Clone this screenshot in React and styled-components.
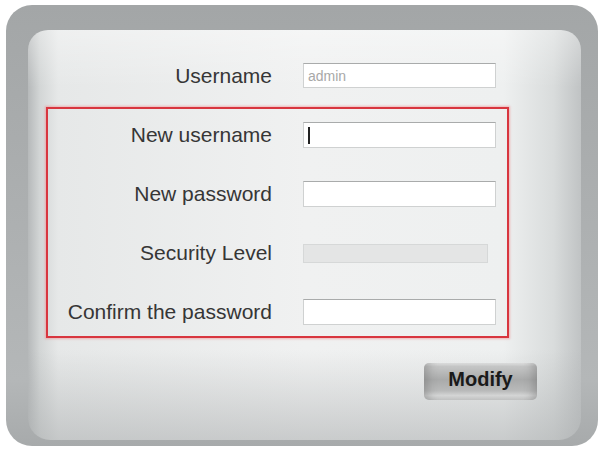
import React from 'react'
import styled, { createGlobalStyle } from 'styled-components'

const GlobalStyle = createGlobalStyle`
    html, body {
        margin: 0;
        padding: 0;
        background: #ffffff;
    }
    body {
        font-family: "Liberation Sans", Arial, sans-serif;
    }
`

const Page = styled.div`
    width: 603px;
    height: 451px;
    padding: 5px 5px 5px 6px;
    box-sizing: border-box;
`

const Frame = styled.div`
    width: 592px;
    height: 441px;
    box-sizing: border-box;
    padding: 25px 17px 6px 22px;
    border-radius: 26px;
    background: linear-gradient(to bottom, #a3a6a7 0%, #abaeaf 40%, #b4b7b8 85%, #a7aaab 100%);
`

const Panel = styled.div`
    height: 100%;
    box-sizing: border-box;
    padding-top: 33px;
    border-radius: 20px 20px 22px 22px;
    background:
        linear-gradient(to bottom, rgba(255, 255, 255, 0.35) 0, rgba(255, 255, 255, 0) 14%),
        linear-gradient(to bottom, rgba(170, 173, 174, 0) 78%, rgba(170, 173, 174, 0.55) 100%),
        linear-gradient(to right, #b6b9ba 0, #d3d6d6 12px, #e6e8e8 30px, #f0f1f1 50%, #eef0f0 86%, #d9dcdc 95%, #c0c3c4 100%);
    display: flex;
    flex-direction: column;
`

const Row = styled.div`
    display: grid;
    grid-template-columns: 224px 193px;
    column-gap: 31px;
    align-items: center;
    height: ${p => p.$h || 26}px;
    padding-left: ${p => p.$indent || 0}px;
`

const Label = styled.span`
    text-align: right;
    font-size: 21px;
    color: #363636;
    white-space: nowrap;
`

const Field = styled.div`
    height: ${p => p.$h || 26}px;
    box-sizing: border-box;
    background: #ffffff;
    border: 1px solid #cfd1d1;
    border-top-color: #a9abab;
    display: flex;
    align-items: center;
    padding-left: 4px;
    font-size: 14px;
    color: #a8a8a8;
`

const Caret = styled.span`
    display: block;
    width: 2px;
    height: 17px;
    background: #222;
`

const LevelBar = styled.div`
    width: 185px;
    height: 19px;
    box-sizing: border-box;
    background: #e4e5e5;
    border: 1px solid #d6d8d8;
`

const Highlight = styled.div`
    margin: 19px 0 0 18px;
    width: 463px;
    box-sizing: border-box;
    border: 2px solid #d8363f;
    box-shadow: 0 0 2px 1px rgba(240, 130, 135, 0.55);
    padding: 13px 0 11px 0;
    display: flex;
    flex-direction: column;
    gap: 33px;
`

const Actions = styled.div`
    display: flex;
    justify-content: flex-end;
    margin: 25px 44px 0 0;
`

const Button = styled.button`
    width: 113px;
    height: 37px;
    border: none;
    border-radius: 5px;
    font-family: "Liberation Sans", Arial, sans-serif;
    font-weight: bold;
    font-size: 20px;
    color: #1a1a1a;
    padding: 0 0 5px 0;
    background: linear-gradient(to bottom, #e6e7e7 0%, #c4c5c5 10%, #a9aaaa 45%, #b9baba 75%, #d4d5d5 88%, #c9caca 100%);
    box-shadow: inset 10px 0 10px -6px rgba(90, 90, 90, 0.35), inset -10px 0 10px -6px rgba(90, 90, 90, 0.35);
`

const fields = [
    { label: 'New username', kind: 'caret' },
    { label: 'New password', kind: 'field' },
    { label: 'Security Level', kind: 'level' },
    { label: 'Confirm the password', kind: 'field' },
]

const App = () => {
    return (
        <Page>
            <GlobalStyle />
            <Frame>
                <Panel>
                    <Row $indent={20} $h={25}>
                        <Label>Username</Label>
                        <Field $h={25}>admin</Field>
                    </Row>
                    <Highlight>
                        {
                            fields.map(f => (
                                <Row key={f.label}>
                                    <Label>{f.label}</Label>
                                    { f.kind === 'level' ? <LevelBar /> : (
                                        <Field>{ f.kind === 'caret' ? <Caret /> : null }</Field>
                                    ) }
                                </Row>
                            ))
                        }
                    </Highlight>
                    <Actions>
                        <Button>Modify</Button>
                    </Actions>
                </Panel>
            </Frame>
        </Page>
    )
}

export default App
